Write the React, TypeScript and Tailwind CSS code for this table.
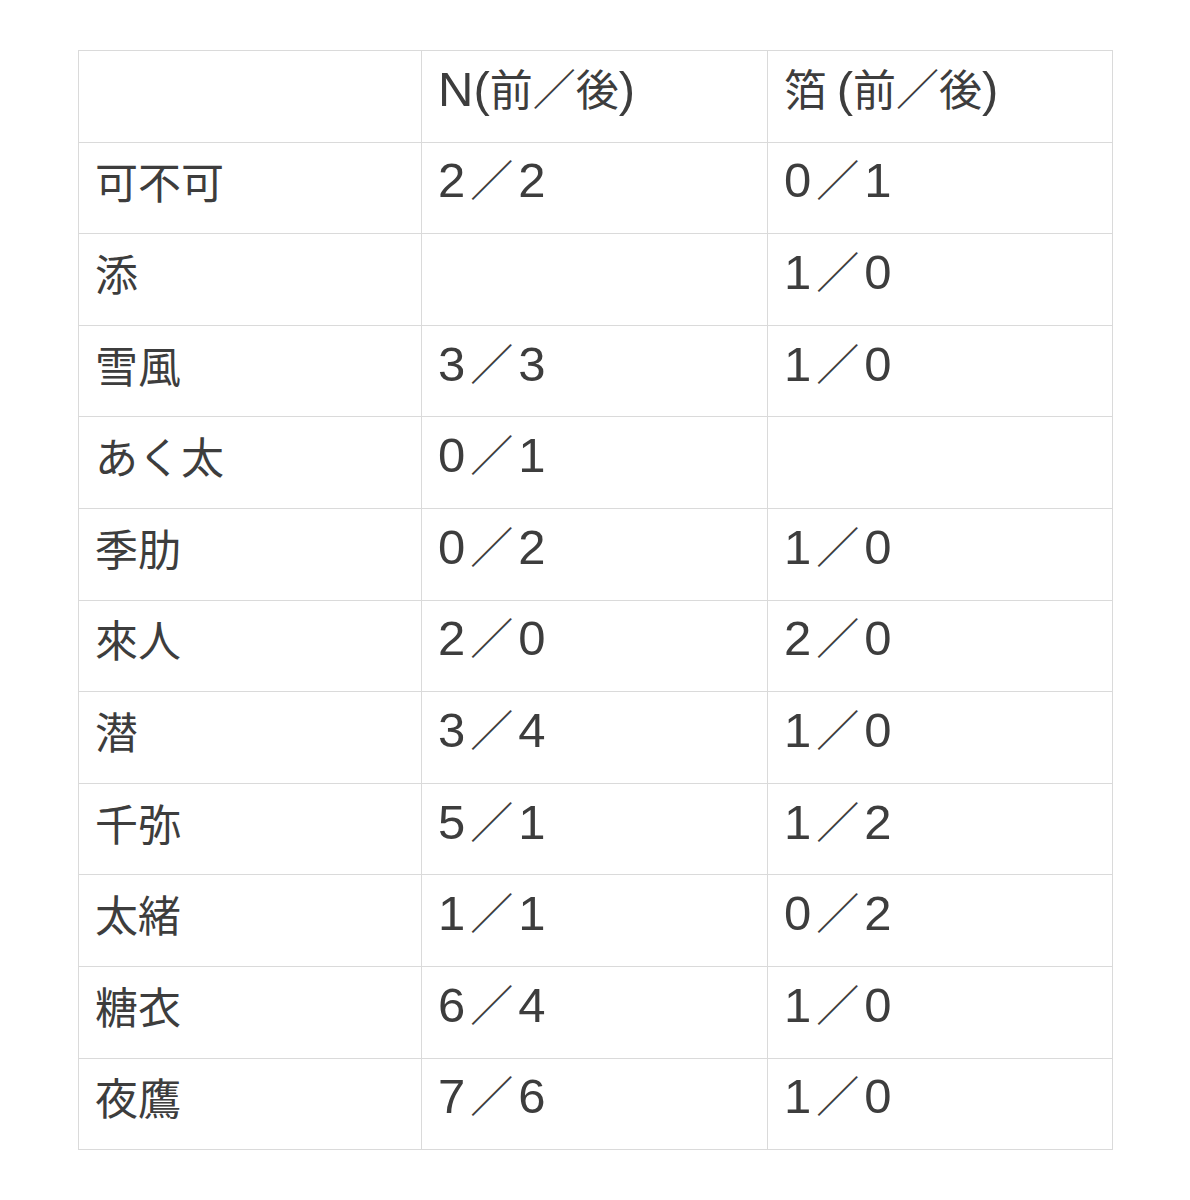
const rows: [string, string, string][] = [
  ["可不可", "2／2", "0／1"],
  ["添", "", "1／0"],
  ["雪風", "3／3", "1／0"],
  ["あく太", "0／1", ""],
  ["季肋", "0／2", "1／0"],
  ["來人", "2／0", "2／0"],
  ["潜", "3／4", "1／0"],
  ["千弥", "5／1", "1／2"],
  ["太緒", "1／1", "0／2"],
  ["糖衣", "6／4", "1／0"],
  ["夜鷹", "7／6", "1／0"],
];

const latin = { fontFamily: '"Liberation Sans", sans-serif' };

// header text: Latin runs set larger in a Helvetica-like face
function Head({ s }: { s: string }) {
  const parts = s.match(/[!-~]+|[^!-~]+/g) ?? [];
  return (
    <>
      {parts.map((p, i) =>
        /^[!-~]+$/.test(p) ? (
          <span key={i} className="text-[49px]" style={latin}>{p}</span>
        ) : (
          <span key={i}>{p}</span>
        )
      )}
    </>
  );
}

// "a／b" score cell
function Score({ s }: { s: string }) {
  if (!s) return null;
  const [a, b] = s.split("／");
  return (
    <>
      <span className="text-[49px]" style={latin}>{a}</span>
      <span className="mx-[5px]">／</span>
      <span className="text-[49px]" style={latin}>{b}</span>
    </>
  );
}

export default function App() {
  const cell = "border border-[#dadada] pl-4 pb-[14px] align-middle whitespace-nowrap";
  return (
    <div
      className="w-[1190px] h-[1200px] bg-white pt-[50px] pl-[78px] text-[#3d3d3d]"
      style={{ fontFamily: '"Noto Sans CJK JP", "Noto Sans", sans-serif' }}
    >
      <table className="table-fixed border-collapse w-[1034px] text-[43px] leading-none">
        <colgroup>
          <col className="w-[343px]" />
          <col className="w-[346px]" />
          <col className="w-[345px]" />
        </colgroup>
        <thead>
          <tr className="h-[91.6px]">
            <th className={`${cell} font-normal text-left`}></th>
            <th className={`${cell} font-normal text-left`}><Head s="N(前／後)" /></th>
            <th className={`${cell} font-normal text-left`}><Head s="箔 (前／後)" /></th>
          </tr>
        </thead>
        <tbody>
          {rows.map(r => (
            <tr key={r[0]} className="h-[91.6px]">
              <td className={cell}>{r[0]}</td>
              <td className={cell}><Score s={r[1]} /></td>
              <td className={cell}><Score s={r[2]} /></td>
            </tr>
          ))}
        </tbody>
      </table>
    </div>
  );
}
